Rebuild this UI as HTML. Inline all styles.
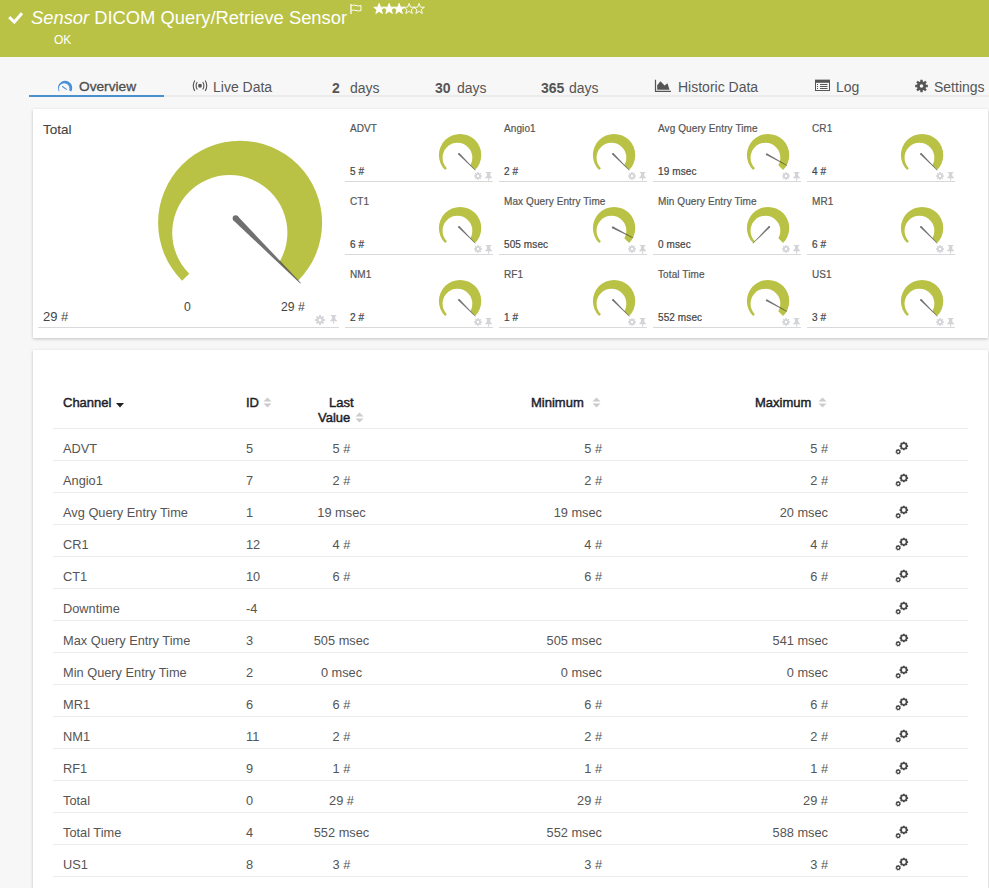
<!DOCTYPE html><html><head><meta charset="utf-8"><title>DICOM Query/Retrieve Sensor</title><style>
*{box-sizing:border-box}
html,body{margin:0;padding:0}
body{width:989px;height:888px;overflow:hidden;background:#f7f7f7;font-family:"Liberation Sans",sans-serif;position:relative;color:#555}
.a{position:absolute;white-space:nowrap}
.hdr{position:absolute;left:0;top:0;width:989px;height:57px;background:#b9c244}
.ttl{left:31px;top:7px;font-size:18.35px;line-height:22px;color:#fff}
.ok{left:54px;top:33px;font-size:12px;line-height:14px;color:#fff}
.tab{top:80px;font-size:14px;line-height:15px;color:#555}
.tabline{position:absolute;left:29px;top:95px;width:960px;height:2px;background:#ebebeb}
.tabsel{position:absolute;left:29px;top:95px;width:135px;height:2px;background:#4a90cf}
.panel{position:absolute;background:#fff;box-shadow:0 1px 3px rgba(0,0,0,.22)}
.gt{font-size:10px;letter-spacing:0.1px;line-height:12px;color:#555;-webkit-text-stroke:0.2px #555}
.gv{font-size:10px;letter-spacing:0.1px;line-height:12px;color:#444;-webkit-text-stroke:0.2px #444}
.sep{position:absolute;height:1px;background:#d9d9d9}
.th{font-size:13px;line-height:15px;color:#1e1e2a;-webkit-text-stroke:0.45px #1e1e2a}
.td{font-size:12.8px;line-height:15px;color:#555}
.rl{position:absolute;left:53px;width:915px;height:1px;background:#ebebeb}
</style></head><body>
<div class="hdr"></div>
<svg class="a" style="left:8px;top:11px" width="16" height="14" viewBox="0 0 16 14"><path d="M1.2 6.2L6.3 11L14 2.2" fill="none" stroke="#fff" stroke-width="3"/></svg>
<div class="a ttl"><i>Sensor</i> DICOM Query/Retrieve Sensor</div>
<svg class="a" style="left:350px;top:4px" width="12" height="10" viewBox="0 0 12 10"><path d="M1 0V10" stroke="#fff" stroke-width="1.3"/><path d="M1.5 1.5Q3.5 0.5 6 1.5T11 1.5V6.5Q8.5 7.5 6 6.5T1.5 6.5" fill="none" stroke="#fff" stroke-width="1"/></svg>
<svg class="a" style="left:0;top:0" width="989" height="20"><polygon points="379.10,3.40 380.45,7.14 384.43,7.27 381.29,9.71 382.39,13.53 379.10,11.30 375.81,13.53 376.91,9.71 373.77,7.27 377.75,7.14" fill="#fff" stroke="#fff" stroke-width="0.9"/><polygon points="389.10,3.40 390.45,7.14 394.43,7.27 391.29,9.71 392.39,13.53 389.10,11.30 385.81,13.53 386.91,9.71 383.77,7.27 387.75,7.14" fill="#fff" stroke="#fff" stroke-width="0.9"/><polygon points="399.10,3.40 400.45,7.14 404.43,7.27 401.29,9.71 402.39,13.53 399.10,11.30 395.81,13.53 396.91,9.71 393.77,7.27 397.75,7.14" fill="#fff" stroke="#fff" stroke-width="0.9"/><polygon points="409.10,3.40 410.45,7.14 414.43,7.27 411.29,9.71 412.39,13.53 409.10,11.30 405.81,13.53 406.91,9.71 403.77,7.27 407.75,7.14" fill="none" stroke="#fff" stroke-width="0.9"/><polygon points="419.10,3.40 420.45,7.14 424.43,7.27 421.29,9.71 422.39,13.53 419.10,11.30 415.81,13.53 416.91,9.71 413.77,7.27 417.75,7.14" fill="none" stroke="#fff" stroke-width="0.9"/></svg>
<div class="a ok">OK</div>
<div class="tabline"></div><div class="tabsel"></div>
<svg class="a" style="left:58px;top:80px" width="15" height="13" viewBox="0 0 15 13"><path d="M7.10 7.90L0.95 11.45A7.10 7.10 0 1 1 13.25 11.45Z" fill="#4a90d9"/><circle cx="6.20" cy="8.60" r="5.30" fill="#f7f7f7"/><path d="M4.2 6.3L8.7 9.6" stroke="#4a90d9" stroke-width="1.1"/></svg>
<div class="a tab" style="left:79px;top:79px;font-size:13.7px;color:#4d4d4d;-webkit-text-stroke:0.3px #4d4d4d">Overview</div>
<svg class="a" style="left:192px;top:80px" width="16" height="12" viewBox="0 0 16 12"><circle cx="8" cy="5.75" r="1.9" fill="#555"/><path d="M2.8 0.5A10.3 10.3 0 0 0 2.8 11M5.3 2A6.9 6.9 0 0 0 5.3 9.5M13.2 0.5A10.3 10.3 0 0 1 13.2 11M10.7 2A6.9 6.9 0 0 1 10.7 9.5" fill="none" stroke="#555" stroke-width="1.1"/></svg>
<div class="a tab" style="left:213px">Live Data</div>
<div class="a tab" style="left:332px;top:81px"><b>2</b></div><div class="a tab" style="left:350px;top:81px">days</div>
<div class="a tab" style="left:435px;top:81px"><b>30</b></div><div class="a tab" style="left:457px;top:81px">days</div>
<div class="a tab" style="left:541px;top:81px"><b>365</b></div><div class="a tab" style="left:569px;top:81px">days</div>
<svg class="a" style="left:654px;top:79px" width="18" height="14" viewBox="0 0 18 14"><path d="M1.5 0.8V12.4H17" fill="none" stroke="#555" stroke-width="1.2"/><path d="M3.2 10.7V6.3L6.4 2.2L10.6 6.6L13.5 4.2L15.5 10.7Z" fill="#555"/></svg>
<div class="a tab" style="left:678px">Historic Data</div>
<svg class="a" style="left:815px;top:79px" width="16" height="13" viewBox="0 0 16 13"><rect x="0.5" y="1.3" width="14" height="10.2" fill="none" stroke="#555" stroke-width="1"/><rect x="0" y="0.8" width="15" height="3" fill="#555"/><path d="M2 5.5H3M5 5.5H12.5M2 7.5H3M5 7.5H12.5M2 9.5H3M5 9.5H12.5" stroke="#555" stroke-width="1"/></svg>
<div class="a tab" style="left:836px">Log</div>
<svg class="a" style="left:914px;top:79px" width="15" height="14" viewBox="0 0 15 14"><path fill-rule="evenodd" d="M6.27 2.57L6.37 0.70L8.63 0.70L8.73 2.57L9.76 3.00L11.16 1.75L12.75 3.34L11.50 4.74L11.93 5.77L13.80 5.87L13.80 8.13L11.93 8.23L11.50 9.26L12.75 10.66L11.16 12.25L9.76 11.00L8.73 11.43L8.63 13.30L6.37 13.30L6.27 11.43L5.24 11.00L3.84 12.25L2.25 10.66L3.50 9.26L3.07 8.23L1.20 8.13L1.20 5.87L3.07 5.77L3.50 4.74L2.25 3.34L3.84 1.75L5.24 3.00ZM9.30 7.00A1.80 1.80 0 1 0 5.70 7.00A1.80 1.80 0 1 0 9.30 7.00Z" fill="#555"/></svg>
<div class="a tab" style="left:934px">Settings</div>
<div class="panel" style="left:33px;top:109px;width:955px;height:229px"></div>
<div class="a" style="left:43px;top:122px;font-size:13.5px;line-height:15px;color:#444;-webkit-text-stroke:0.1px #444">Total</div>
<div class="a" style="left:43px;top:309px;font-size:13px;line-height:15px;color:#444">29 #</div>
<div class="a" style="left:184px;top:301px;font-size:12.2px;line-height:13px;color:#444">0</div>
<div class="a" style="left:281px;top:301px;font-size:12.2px;line-height:13px;color:#444">29 #</div>
<div class="sep" style="left:38px;top:327px;width:301px"></div>
<svg class="a" style="left:315.0px;top:315.0px" width="10" height="10" viewBox="0 0 10 10"><path fill-rule="evenodd" d="M4.04 1.53L4.12 0.08L5.88 0.08L5.96 1.53L6.77 1.87L7.86 0.90L9.10 2.14L8.13 3.23L8.47 4.04L9.92 4.12L9.92 5.88L8.47 5.96L8.13 6.77L9.10 7.86L7.86 9.10L6.77 8.13L5.96 8.47L5.88 9.92L4.12 9.92L4.04 8.47L3.23 8.13L2.14 9.10L0.90 7.86L1.87 6.77L1.53 5.96L0.08 5.88L0.08 4.12L1.53 4.04L1.87 3.23L0.90 2.14L2.14 0.90L3.23 1.87ZM6.50 5.00A1.50 1.50 0 1 0 3.50 5.00A1.50 1.50 0 1 0 6.50 5.00Z" fill="#d2d4d8"/></svg><svg class="a" style="left:330px;top:315px" width="8" height="10" viewBox="0 0 8 10"><path d="M0.8 0H6.4V1.1H5.3V3.9L7 5.5V6.3H4.1V8.7H3.1V6.3H0.2V5.5L1.9 3.9V1.1H0.8Z" fill="#d2d4d8"/></svg>
<div class="a gt" style="left:350px;top:123px">ADVT</div>
<div class="a gv" style="left:350px;top:166px">5 #</div>
<div class="sep" style="left:345px;top:181px;width:148px"></div>
<svg class="a" style="left:473.0px;top:170.5px" width="10" height="10" viewBox="0 0 10 10"><path fill-rule="evenodd" d="M4.23 2.23L4.30 1.06L5.70 1.06L5.77 2.23L6.42 2.49L7.29 1.72L8.28 2.71L7.51 3.58L7.77 4.23L8.94 4.30L8.94 5.70L7.77 5.77L7.51 6.42L8.28 7.29L7.29 8.28L6.42 7.51L5.77 7.77L5.70 8.94L4.30 8.94L4.23 7.77L3.58 7.51L2.71 8.28L1.72 7.29L2.49 6.42L2.23 5.77L1.06 5.70L1.06 4.30L2.23 4.23L2.49 3.58L1.72 2.71L2.71 1.72L3.58 2.49ZM6.20 5.00A1.20 1.20 0 1 0 3.80 5.00A1.20 1.20 0 1 0 6.20 5.00Z" fill="#d2d4d8"/></svg><svg class="a" style="left:485px;top:172px" width="8" height="10" viewBox="0 0 8 10"><path d="M0.8 0H6.4V1.1H5.3V3.9L7 5.5V6.3H4.1V8.7H3.1V6.3H0.2V5.5L1.9 3.9V1.1H0.8Z" fill="#d2d4d8"/></svg>
<div class="a gt" style="left:504px;top:123px">Angio1</div>
<div class="a gv" style="left:504px;top:166px">2 #</div>
<div class="sep" style="left:499px;top:181px;width:148px"></div>
<svg class="a" style="left:627.0px;top:170.5px" width="10" height="10" viewBox="0 0 10 10"><path fill-rule="evenodd" d="M4.23 2.23L4.30 1.06L5.70 1.06L5.77 2.23L6.42 2.49L7.29 1.72L8.28 2.71L7.51 3.58L7.77 4.23L8.94 4.30L8.94 5.70L7.77 5.77L7.51 6.42L8.28 7.29L7.29 8.28L6.42 7.51L5.77 7.77L5.70 8.94L4.30 8.94L4.23 7.77L3.58 7.51L2.71 8.28L1.72 7.29L2.49 6.42L2.23 5.77L1.06 5.70L1.06 4.30L2.23 4.23L2.49 3.58L1.72 2.71L2.71 1.72L3.58 2.49ZM6.20 5.00A1.20 1.20 0 1 0 3.80 5.00A1.20 1.20 0 1 0 6.20 5.00Z" fill="#d2d4d8"/></svg><svg class="a" style="left:639px;top:172px" width="8" height="10" viewBox="0 0 8 10"><path d="M0.8 0H6.4V1.1H5.3V3.9L7 5.5V6.3H4.1V8.7H3.1V6.3H0.2V5.5L1.9 3.9V1.1H0.8Z" fill="#d2d4d8"/></svg>
<div class="a gt" style="left:658px;top:123px">Avg Query Entry Time</div>
<div class="a gv" style="left:658px;top:166px">19 msec</div>
<div class="sep" style="left:653px;top:181px;width:148px"></div>
<svg class="a" style="left:781.0px;top:170.5px" width="10" height="10" viewBox="0 0 10 10"><path fill-rule="evenodd" d="M4.23 2.23L4.30 1.06L5.70 1.06L5.77 2.23L6.42 2.49L7.29 1.72L8.28 2.71L7.51 3.58L7.77 4.23L8.94 4.30L8.94 5.70L7.77 5.77L7.51 6.42L8.28 7.29L7.29 8.28L6.42 7.51L5.77 7.77L5.70 8.94L4.30 8.94L4.23 7.77L3.58 7.51L2.71 8.28L1.72 7.29L2.49 6.42L2.23 5.77L1.06 5.70L1.06 4.30L2.23 4.23L2.49 3.58L1.72 2.71L2.71 1.72L3.58 2.49ZM6.20 5.00A1.20 1.20 0 1 0 3.80 5.00A1.20 1.20 0 1 0 6.20 5.00Z" fill="#d2d4d8"/></svg><svg class="a" style="left:793px;top:172px" width="8" height="10" viewBox="0 0 8 10"><path d="M0.8 0H6.4V1.1H5.3V3.9L7 5.5V6.3H4.1V8.7H3.1V6.3H0.2V5.5L1.9 3.9V1.1H0.8Z" fill="#d2d4d8"/></svg>
<div class="a gt" style="left:812px;top:123px">CR1</div>
<div class="a gv" style="left:812px;top:166px">4 #</div>
<div class="sep" style="left:807px;top:181px;width:148px"></div>
<svg class="a" style="left:935.0px;top:170.5px" width="10" height="10" viewBox="0 0 10 10"><path fill-rule="evenodd" d="M4.23 2.23L4.30 1.06L5.70 1.06L5.77 2.23L6.42 2.49L7.29 1.72L8.28 2.71L7.51 3.58L7.77 4.23L8.94 4.30L8.94 5.70L7.77 5.77L7.51 6.42L8.28 7.29L7.29 8.28L6.42 7.51L5.77 7.77L5.70 8.94L4.30 8.94L4.23 7.77L3.58 7.51L2.71 8.28L1.72 7.29L2.49 6.42L2.23 5.77L1.06 5.70L1.06 4.30L2.23 4.23L2.49 3.58L1.72 2.71L2.71 1.72L3.58 2.49ZM6.20 5.00A1.20 1.20 0 1 0 3.80 5.00A1.20 1.20 0 1 0 6.20 5.00Z" fill="#d2d4d8"/></svg><svg class="a" style="left:947px;top:172px" width="8" height="10" viewBox="0 0 8 10"><path d="M0.8 0H6.4V1.1H5.3V3.9L7 5.5V6.3H4.1V8.7H3.1V6.3H0.2V5.5L1.9 3.9V1.1H0.8Z" fill="#d2d4d8"/></svg>
<div class="a gt" style="left:350px;top:196px">CT1</div>
<div class="a gv" style="left:350px;top:239px">6 #</div>
<div class="sep" style="left:345px;top:254px;width:148px"></div>
<svg class="a" style="left:473.0px;top:243.5px" width="10" height="10" viewBox="0 0 10 10"><path fill-rule="evenodd" d="M4.23 2.23L4.30 1.06L5.70 1.06L5.77 2.23L6.42 2.49L7.29 1.72L8.28 2.71L7.51 3.58L7.77 4.23L8.94 4.30L8.94 5.70L7.77 5.77L7.51 6.42L8.28 7.29L7.29 8.28L6.42 7.51L5.77 7.77L5.70 8.94L4.30 8.94L4.23 7.77L3.58 7.51L2.71 8.28L1.72 7.29L2.49 6.42L2.23 5.77L1.06 5.70L1.06 4.30L2.23 4.23L2.49 3.58L1.72 2.71L2.71 1.72L3.58 2.49ZM6.20 5.00A1.20 1.20 0 1 0 3.80 5.00A1.20 1.20 0 1 0 6.20 5.00Z" fill="#d2d4d8"/></svg><svg class="a" style="left:485px;top:245px" width="8" height="10" viewBox="0 0 8 10"><path d="M0.8 0H6.4V1.1H5.3V3.9L7 5.5V6.3H4.1V8.7H3.1V6.3H0.2V5.5L1.9 3.9V1.1H0.8Z" fill="#d2d4d8"/></svg>
<div class="a gt" style="left:504px;top:196px">Max Query Entry Time</div>
<div class="a gv" style="left:504px;top:239px">505 msec</div>
<div class="sep" style="left:499px;top:254px;width:148px"></div>
<svg class="a" style="left:627.0px;top:243.5px" width="10" height="10" viewBox="0 0 10 10"><path fill-rule="evenodd" d="M4.23 2.23L4.30 1.06L5.70 1.06L5.77 2.23L6.42 2.49L7.29 1.72L8.28 2.71L7.51 3.58L7.77 4.23L8.94 4.30L8.94 5.70L7.77 5.77L7.51 6.42L8.28 7.29L7.29 8.28L6.42 7.51L5.77 7.77L5.70 8.94L4.30 8.94L4.23 7.77L3.58 7.51L2.71 8.28L1.72 7.29L2.49 6.42L2.23 5.77L1.06 5.70L1.06 4.30L2.23 4.23L2.49 3.58L1.72 2.71L2.71 1.72L3.58 2.49ZM6.20 5.00A1.20 1.20 0 1 0 3.80 5.00A1.20 1.20 0 1 0 6.20 5.00Z" fill="#d2d4d8"/></svg><svg class="a" style="left:639px;top:245px" width="8" height="10" viewBox="0 0 8 10"><path d="M0.8 0H6.4V1.1H5.3V3.9L7 5.5V6.3H4.1V8.7H3.1V6.3H0.2V5.5L1.9 3.9V1.1H0.8Z" fill="#d2d4d8"/></svg>
<div class="a gt" style="left:658px;top:196px">Min Query Entry Time</div>
<div class="a gv" style="left:658px;top:239px">0 msec</div>
<div class="sep" style="left:653px;top:254px;width:148px"></div>
<svg class="a" style="left:781.0px;top:243.5px" width="10" height="10" viewBox="0 0 10 10"><path fill-rule="evenodd" d="M4.23 2.23L4.30 1.06L5.70 1.06L5.77 2.23L6.42 2.49L7.29 1.72L8.28 2.71L7.51 3.58L7.77 4.23L8.94 4.30L8.94 5.70L7.77 5.77L7.51 6.42L8.28 7.29L7.29 8.28L6.42 7.51L5.77 7.77L5.70 8.94L4.30 8.94L4.23 7.77L3.58 7.51L2.71 8.28L1.72 7.29L2.49 6.42L2.23 5.77L1.06 5.70L1.06 4.30L2.23 4.23L2.49 3.58L1.72 2.71L2.71 1.72L3.58 2.49ZM6.20 5.00A1.20 1.20 0 1 0 3.80 5.00A1.20 1.20 0 1 0 6.20 5.00Z" fill="#d2d4d8"/></svg><svg class="a" style="left:793px;top:245px" width="8" height="10" viewBox="0 0 8 10"><path d="M0.8 0H6.4V1.1H5.3V3.9L7 5.5V6.3H4.1V8.7H3.1V6.3H0.2V5.5L1.9 3.9V1.1H0.8Z" fill="#d2d4d8"/></svg>
<div class="a gt" style="left:812px;top:196px">MR1</div>
<div class="a gv" style="left:812px;top:239px">6 #</div>
<div class="sep" style="left:807px;top:254px;width:148px"></div>
<svg class="a" style="left:935.0px;top:243.5px" width="10" height="10" viewBox="0 0 10 10"><path fill-rule="evenodd" d="M4.23 2.23L4.30 1.06L5.70 1.06L5.77 2.23L6.42 2.49L7.29 1.72L8.28 2.71L7.51 3.58L7.77 4.23L8.94 4.30L8.94 5.70L7.77 5.77L7.51 6.42L8.28 7.29L7.29 8.28L6.42 7.51L5.77 7.77L5.70 8.94L4.30 8.94L4.23 7.77L3.58 7.51L2.71 8.28L1.72 7.29L2.49 6.42L2.23 5.77L1.06 5.70L1.06 4.30L2.23 4.23L2.49 3.58L1.72 2.71L2.71 1.72L3.58 2.49ZM6.20 5.00A1.20 1.20 0 1 0 3.80 5.00A1.20 1.20 0 1 0 6.20 5.00Z" fill="#d2d4d8"/></svg><svg class="a" style="left:947px;top:245px" width="8" height="10" viewBox="0 0 8 10"><path d="M0.8 0H6.4V1.1H5.3V3.9L7 5.5V6.3H4.1V8.7H3.1V6.3H0.2V5.5L1.9 3.9V1.1H0.8Z" fill="#d2d4d8"/></svg>
<div class="a gt" style="left:350px;top:269px">NM1</div>
<div class="a gv" style="left:350px;top:312px">2 #</div>
<div class="sep" style="left:345px;top:327px;width:148px"></div>
<svg class="a" style="left:473.0px;top:316.5px" width="10" height="10" viewBox="0 0 10 10"><path fill-rule="evenodd" d="M4.23 2.23L4.30 1.06L5.70 1.06L5.77 2.23L6.42 2.49L7.29 1.72L8.28 2.71L7.51 3.58L7.77 4.23L8.94 4.30L8.94 5.70L7.77 5.77L7.51 6.42L8.28 7.29L7.29 8.28L6.42 7.51L5.77 7.77L5.70 8.94L4.30 8.94L4.23 7.77L3.58 7.51L2.71 8.28L1.72 7.29L2.49 6.42L2.23 5.77L1.06 5.70L1.06 4.30L2.23 4.23L2.49 3.58L1.72 2.71L2.71 1.72L3.58 2.49ZM6.20 5.00A1.20 1.20 0 1 0 3.80 5.00A1.20 1.20 0 1 0 6.20 5.00Z" fill="#d2d4d8"/></svg><svg class="a" style="left:485px;top:318px" width="8" height="10" viewBox="0 0 8 10"><path d="M0.8 0H6.4V1.1H5.3V3.9L7 5.5V6.3H4.1V8.7H3.1V6.3H0.2V5.5L1.9 3.9V1.1H0.8Z" fill="#d2d4d8"/></svg>
<div class="a gt" style="left:504px;top:269px">RF1</div>
<div class="a gv" style="left:504px;top:312px">1 #</div>
<div class="sep" style="left:499px;top:327px;width:148px"></div>
<svg class="a" style="left:627.0px;top:316.5px" width="10" height="10" viewBox="0 0 10 10"><path fill-rule="evenodd" d="M4.23 2.23L4.30 1.06L5.70 1.06L5.77 2.23L6.42 2.49L7.29 1.72L8.28 2.71L7.51 3.58L7.77 4.23L8.94 4.30L8.94 5.70L7.77 5.77L7.51 6.42L8.28 7.29L7.29 8.28L6.42 7.51L5.77 7.77L5.70 8.94L4.30 8.94L4.23 7.77L3.58 7.51L2.71 8.28L1.72 7.29L2.49 6.42L2.23 5.77L1.06 5.70L1.06 4.30L2.23 4.23L2.49 3.58L1.72 2.71L2.71 1.72L3.58 2.49ZM6.20 5.00A1.20 1.20 0 1 0 3.80 5.00A1.20 1.20 0 1 0 6.20 5.00Z" fill="#d2d4d8"/></svg><svg class="a" style="left:639px;top:318px" width="8" height="10" viewBox="0 0 8 10"><path d="M0.8 0H6.4V1.1H5.3V3.9L7 5.5V6.3H4.1V8.7H3.1V6.3H0.2V5.5L1.9 3.9V1.1H0.8Z" fill="#d2d4d8"/></svg>
<div class="a gt" style="left:658px;top:269px">Total Time</div>
<div class="a gv" style="left:658px;top:312px">552 msec</div>
<div class="sep" style="left:653px;top:327px;width:148px"></div>
<svg class="a" style="left:781.0px;top:316.5px" width="10" height="10" viewBox="0 0 10 10"><path fill-rule="evenodd" d="M4.23 2.23L4.30 1.06L5.70 1.06L5.77 2.23L6.42 2.49L7.29 1.72L8.28 2.71L7.51 3.58L7.77 4.23L8.94 4.30L8.94 5.70L7.77 5.77L7.51 6.42L8.28 7.29L7.29 8.28L6.42 7.51L5.77 7.77L5.70 8.94L4.30 8.94L4.23 7.77L3.58 7.51L2.71 8.28L1.72 7.29L2.49 6.42L2.23 5.77L1.06 5.70L1.06 4.30L2.23 4.23L2.49 3.58L1.72 2.71L2.71 1.72L3.58 2.49ZM6.20 5.00A1.20 1.20 0 1 0 3.80 5.00A1.20 1.20 0 1 0 6.20 5.00Z" fill="#d2d4d8"/></svg><svg class="a" style="left:793px;top:318px" width="8" height="10" viewBox="0 0 8 10"><path d="M0.8 0H6.4V1.1H5.3V3.9L7 5.5V6.3H4.1V8.7H3.1V6.3H0.2V5.5L1.9 3.9V1.1H0.8Z" fill="#d2d4d8"/></svg>
<div class="a gt" style="left:812px;top:269px">US1</div>
<div class="a gv" style="left:812px;top:312px">3 #</div>
<div class="sep" style="left:807px;top:327px;width:148px"></div>
<svg class="a" style="left:935.0px;top:316.5px" width="10" height="10" viewBox="0 0 10 10"><path fill-rule="evenodd" d="M4.23 2.23L4.30 1.06L5.70 1.06L5.77 2.23L6.42 2.49L7.29 1.72L8.28 2.71L7.51 3.58L7.77 4.23L8.94 4.30L8.94 5.70L7.77 5.77L7.51 6.42L8.28 7.29L7.29 8.28L6.42 7.51L5.77 7.77L5.70 8.94L4.30 8.94L4.23 7.77L3.58 7.51L2.71 8.28L1.72 7.29L2.49 6.42L2.23 5.77L1.06 5.70L1.06 4.30L2.23 4.23L2.49 3.58L1.72 2.71L2.71 1.72L3.58 2.49ZM6.20 5.00A1.20 1.20 0 1 0 3.80 5.00A1.20 1.20 0 1 0 6.20 5.00Z" fill="#d2d4d8"/></svg><svg class="a" style="left:947px;top:318px" width="8" height="10" viewBox="0 0 8 10"><path d="M0.8 0H6.4V1.1H5.3V3.9L7 5.5V6.3H4.1V8.7H3.1V6.3H0.2V5.5L1.9 3.9V1.1H0.8Z" fill="#d2d4d8"/></svg>
<svg class="a" style="left:0;top:0" width="989" height="340"><path d="M240.10 222.80L182.12 280.78A82.00 82.00 0 1 1 298.08 280.78Z" fill="#b9c244"/><circle cx="229.80" cy="232.70" r="57.60" fill="#fff"/><g opacity="0.72" fill="#3a3a3a"><path d="M233.52 220.47L300.24 283.58L300.88 282.94L237.77 216.22Z"/><circle cx="235.65" cy="218.35" r="3.00"/></g><path d="M460.10 155.10L445.11 170.09A21.20 21.20 0 1 1 475.09 170.09Z" fill="#b9c244"/><circle cx="457.44" cy="157.66" r="14.89" fill="#fff"/><g opacity="0.72" fill="#3a3a3a"><path d="M458.33 154.61L475.16 170.59L475.59 170.16L459.61 153.33Z"/><circle cx="458.97" cy="153.97" r="0.90"/></g><path d="M614.10 155.10L599.11 170.09A21.20 21.20 0 1 1 629.09 170.09Z" fill="#b9c244"/><circle cx="611.44" cy="157.66" r="14.89" fill="#fff"/><g opacity="0.72" fill="#3a3a3a"><path d="M612.33 154.61L629.16 170.59L629.59 170.16L613.61 153.33Z"/><circle cx="612.97" cy="153.97" r="0.90"/></g><path d="M768.10 155.10L753.11 170.09A21.20 21.20 0 1 1 783.09 170.09Z" fill="#b9c244"/><circle cx="765.44" cy="157.66" r="14.89" fill="#fff"/><g opacity="0.72" fill="#3a3a3a"><path d="M766.26 155.12L786.88 165.77L787.17 165.24L767.13 153.54Z"/><circle cx="766.70" cy="154.33" r="0.90"/></g><path d="M922.10 155.10L907.11 170.09A21.20 21.20 0 1 1 937.09 170.09Z" fill="#b9c244"/><circle cx="919.44" cy="157.66" r="14.89" fill="#fff"/><g opacity="0.72" fill="#3a3a3a"><path d="M920.33 154.61L937.16 170.59L937.59 170.16L921.61 153.33Z"/><circle cx="920.97" cy="153.97" r="0.90"/></g><path d="M460.10 228.10L445.11 243.09A21.20 21.20 0 1 1 475.09 243.09Z" fill="#b9c244"/><circle cx="457.44" cy="230.66" r="14.89" fill="#fff"/><g opacity="0.72" fill="#3a3a3a"><path d="M458.33 227.61L475.16 243.59L475.59 243.16L459.61 226.33Z"/><circle cx="458.97" cy="226.97" r="0.90"/></g><path d="M614.10 228.10L599.11 243.09A21.20 21.20 0 1 1 629.09 243.09Z" fill="#b9c244"/><circle cx="611.44" cy="230.66" r="14.89" fill="#fff"/><g opacity="0.72" fill="#3a3a3a"><path d="M612.27 228.16L633.13 238.32L633.41 237.79L613.10 226.56Z"/><circle cx="612.68" cy="227.36" r="0.90"/></g><path d="M768.10 228.10L753.11 243.09A21.20 21.20 0 1 1 783.09 243.09Z" fill="#b9c244"/><circle cx="765.44" cy="230.66" r="14.89" fill="#fff"/><g opacity="0.72" fill="#3a3a3a"><path d="M768.59 226.33L752.61 243.16L753.04 243.59L769.87 227.61Z"/><circle cx="769.23" cy="226.97" r="0.90"/></g><path d="M922.10 228.10L907.11 243.09A21.20 21.20 0 1 1 937.09 243.09Z" fill="#b9c244"/><circle cx="919.44" cy="230.66" r="14.89" fill="#fff"/><g opacity="0.72" fill="#3a3a3a"><path d="M920.33 227.61L937.16 243.59L937.59 243.16L921.61 226.33Z"/><circle cx="920.97" cy="226.97" r="0.90"/></g><path d="M460.10 301.10L445.11 316.09A21.20 21.20 0 1 1 475.09 316.09Z" fill="#b9c244"/><circle cx="457.44" cy="303.66" r="14.89" fill="#fff"/><g opacity="0.72" fill="#3a3a3a"><path d="M458.33 300.61L475.16 316.59L475.59 316.16L459.61 299.33Z"/><circle cx="458.97" cy="299.97" r="0.90"/></g><path d="M614.10 301.10L599.11 316.09A21.20 21.20 0 1 1 629.09 316.09Z" fill="#b9c244"/><circle cx="611.44" cy="303.66" r="14.89" fill="#fff"/><g opacity="0.72" fill="#3a3a3a"><path d="M612.33 300.61L629.16 316.59L629.59 316.16L613.61 299.33Z"/><circle cx="612.97" cy="299.97" r="0.90"/></g><path d="M768.10 301.10L753.11 316.09A21.20 21.20 0 1 1 783.09 316.09Z" fill="#b9c244"/><circle cx="765.44" cy="303.66" r="14.89" fill="#fff"/><g opacity="0.72" fill="#3a3a3a"><path d="M766.26 301.12L786.88 311.77L787.17 311.24L767.13 299.54Z"/><circle cx="766.70" cy="300.33" r="0.90"/></g><path d="M922.10 301.10L907.11 316.09A21.20 21.20 0 1 1 937.09 316.09Z" fill="#b9c244"/><circle cx="919.44" cy="303.66" r="14.89" fill="#fff"/><g opacity="0.72" fill="#3a3a3a"><path d="M920.33 300.61L937.16 316.59L937.59 316.16L921.61 299.33Z"/><circle cx="920.97" cy="299.97" r="0.90"/></g></svg>
<div class="panel" style="left:33px;top:350px;width:955px;height:560px"></div>
<div class="a th" style="left:63px;top:395px">Channel</div>
<svg class="a" style="left:116px;top:403px" width="8" height="5"><path d="M0 0H8L4 4.5Z" fill="#222"/></svg>
<div class="a th" style="left:246px;top:395px">ID</div><svg class="a" style="left:263px;top:397px" width="9" height="11"><path d="M0.5 4.5L4.5 0.5L8.5 4.5Z M0.5 6.5L4.5 10.5L8.5 6.5Z" fill="#ccc"/></svg>
<div class="a th" style="left:329px;top:395px">Last</div>
<div class="a th" style="left:318px;top:410px">Value</div><svg class="a" style="left:355px;top:412px" width="9" height="11"><path d="M0.5 4.5L4.5 0.5L8.5 4.5Z M0.5 6.5L4.5 10.5L8.5 6.5Z" fill="#ccc"/></svg>
<div class="a th" style="left:531px;top:395px">Minimum</div><svg class="a" style="left:592px;top:397px" width="9" height="11"><path d="M0.5 4.5L4.5 0.5L8.5 4.5Z M0.5 6.5L4.5 10.5L8.5 6.5Z" fill="#ccc"/></svg>
<div class="a th" style="left:755px;top:395px">Maximum</div><svg class="a" style="left:818px;top:397px" width="9" height="11"><path d="M0.5 4.5L4.5 0.5L8.5 4.5Z M0.5 6.5L4.5 10.5L8.5 6.5Z" fill="#ccc"/></svg>
<div class="rl" style="top:428px"></div>
<div class="a td" style="left:63px;top:441px">ADVT</div>
<div class="a td" style="left:246px;top:441px">5</div>
<div class="a td" style="left:241.5px;width:200px;text-align:center;top:441px">5 #</div>
<div class="a td" style="left:402px;width:200px;text-align:right;top:441px">5 #</div>
<div class="a td" style="left:628px;width:200px;text-align:right;top:441px">5 #</div>
<svg class="a" style="left:895px;top:441px" width="14" height="14" viewBox="0 0 14 14"><path fill-rule="evenodd" fill="#4a4a4a" d="M7.81 1.43L8.03 0.67L9.57 0.67L9.79 1.43L10.62 1.78L11.32 1.39L12.41 2.48L12.02 3.18L12.37 4.01L13.13 4.23L13.13 5.77L12.37 5.99L12.02 6.82L12.41 7.52L11.32 8.61L10.62 8.22L9.79 8.57L9.57 9.33L8.03 9.33L7.81 8.57L6.98 8.22L6.28 8.61L5.19 7.52L5.58 6.82L5.23 5.99L4.47 5.77L4.47 4.23L5.23 4.01L5.58 3.18L5.19 2.48L6.28 1.39L6.98 1.78ZM10.70 5.00A1.90 1.90 0 1 0 6.90 5.00A1.90 1.90 0 1 0 10.70 5.00Z"/><path fill-rule="evenodd" fill="#4a4a4a" d="M2.53 8.60L2.64 7.96L3.76 7.96L3.87 8.60L4.42 8.87L4.99 8.55L5.69 9.43L5.26 9.92L5.39 10.51L6.00 10.76L5.75 11.86L5.09 11.82L4.71 12.30L4.90 12.93L3.88 13.42L3.51 12.88L2.89 12.88L2.52 13.42L1.50 12.93L1.69 12.30L1.31 11.82L0.65 11.86L0.40 10.76L1.01 10.51L1.14 9.92L0.71 9.43L1.41 8.55L1.98 8.87ZM4.20 10.70A1.00 1.00 0 1 0 2.20 10.70A1.00 1.00 0 1 0 4.20 10.70Z"/></svg>
<div class="rl" style="top:460px"></div>
<div class="a td" style="left:63px;top:473px">Angio1</div>
<div class="a td" style="left:246px;top:473px">7</div>
<div class="a td" style="left:241.5px;width:200px;text-align:center;top:473px">2 #</div>
<div class="a td" style="left:402px;width:200px;text-align:right;top:473px">2 #</div>
<div class="a td" style="left:628px;width:200px;text-align:right;top:473px">2 #</div>
<svg class="a" style="left:895px;top:473px" width="14" height="14" viewBox="0 0 14 14"><path fill-rule="evenodd" fill="#4a4a4a" d="M7.81 1.43L8.03 0.67L9.57 0.67L9.79 1.43L10.62 1.78L11.32 1.39L12.41 2.48L12.02 3.18L12.37 4.01L13.13 4.23L13.13 5.77L12.37 5.99L12.02 6.82L12.41 7.52L11.32 8.61L10.62 8.22L9.79 8.57L9.57 9.33L8.03 9.33L7.81 8.57L6.98 8.22L6.28 8.61L5.19 7.52L5.58 6.82L5.23 5.99L4.47 5.77L4.47 4.23L5.23 4.01L5.58 3.18L5.19 2.48L6.28 1.39L6.98 1.78ZM10.70 5.00A1.90 1.90 0 1 0 6.90 5.00A1.90 1.90 0 1 0 10.70 5.00Z"/><path fill-rule="evenodd" fill="#4a4a4a" d="M2.53 8.60L2.64 7.96L3.76 7.96L3.87 8.60L4.42 8.87L4.99 8.55L5.69 9.43L5.26 9.92L5.39 10.51L6.00 10.76L5.75 11.86L5.09 11.82L4.71 12.30L4.90 12.93L3.88 13.42L3.51 12.88L2.89 12.88L2.52 13.42L1.50 12.93L1.69 12.30L1.31 11.82L0.65 11.86L0.40 10.76L1.01 10.51L1.14 9.92L0.71 9.43L1.41 8.55L1.98 8.87ZM4.20 10.70A1.00 1.00 0 1 0 2.20 10.70A1.00 1.00 0 1 0 4.20 10.70Z"/></svg>
<div class="rl" style="top:492px"></div>
<div class="a td" style="left:63px;top:505px">Avg Query Entry Time</div>
<div class="a td" style="left:246px;top:505px">1</div>
<div class="a td" style="left:241.5px;width:200px;text-align:center;top:505px">19 msec</div>
<div class="a td" style="left:402px;width:200px;text-align:right;top:505px">19 msec</div>
<div class="a td" style="left:628px;width:200px;text-align:right;top:505px">20 msec</div>
<svg class="a" style="left:895px;top:505px" width="14" height="14" viewBox="0 0 14 14"><path fill-rule="evenodd" fill="#4a4a4a" d="M7.81 1.43L8.03 0.67L9.57 0.67L9.79 1.43L10.62 1.78L11.32 1.39L12.41 2.48L12.02 3.18L12.37 4.01L13.13 4.23L13.13 5.77L12.37 5.99L12.02 6.82L12.41 7.52L11.32 8.61L10.62 8.22L9.79 8.57L9.57 9.33L8.03 9.33L7.81 8.57L6.98 8.22L6.28 8.61L5.19 7.52L5.58 6.82L5.23 5.99L4.47 5.77L4.47 4.23L5.23 4.01L5.58 3.18L5.19 2.48L6.28 1.39L6.98 1.78ZM10.70 5.00A1.90 1.90 0 1 0 6.90 5.00A1.90 1.90 0 1 0 10.70 5.00Z"/><path fill-rule="evenodd" fill="#4a4a4a" d="M2.53 8.60L2.64 7.96L3.76 7.96L3.87 8.60L4.42 8.87L4.99 8.55L5.69 9.43L5.26 9.92L5.39 10.51L6.00 10.76L5.75 11.86L5.09 11.82L4.71 12.30L4.90 12.93L3.88 13.42L3.51 12.88L2.89 12.88L2.52 13.42L1.50 12.93L1.69 12.30L1.31 11.82L0.65 11.86L0.40 10.76L1.01 10.51L1.14 9.92L0.71 9.43L1.41 8.55L1.98 8.87ZM4.20 10.70A1.00 1.00 0 1 0 2.20 10.70A1.00 1.00 0 1 0 4.20 10.70Z"/></svg>
<div class="rl" style="top:524px"></div>
<div class="a td" style="left:63px;top:537px">CR1</div>
<div class="a td" style="left:246px;top:537px">12</div>
<div class="a td" style="left:241.5px;width:200px;text-align:center;top:537px">4 #</div>
<div class="a td" style="left:402px;width:200px;text-align:right;top:537px">4 #</div>
<div class="a td" style="left:628px;width:200px;text-align:right;top:537px">4 #</div>
<svg class="a" style="left:895px;top:537px" width="14" height="14" viewBox="0 0 14 14"><path fill-rule="evenodd" fill="#4a4a4a" d="M7.81 1.43L8.03 0.67L9.57 0.67L9.79 1.43L10.62 1.78L11.32 1.39L12.41 2.48L12.02 3.18L12.37 4.01L13.13 4.23L13.13 5.77L12.37 5.99L12.02 6.82L12.41 7.52L11.32 8.61L10.62 8.22L9.79 8.57L9.57 9.33L8.03 9.33L7.81 8.57L6.98 8.22L6.28 8.61L5.19 7.52L5.58 6.82L5.23 5.99L4.47 5.77L4.47 4.23L5.23 4.01L5.58 3.18L5.19 2.48L6.28 1.39L6.98 1.78ZM10.70 5.00A1.90 1.90 0 1 0 6.90 5.00A1.90 1.90 0 1 0 10.70 5.00Z"/><path fill-rule="evenodd" fill="#4a4a4a" d="M2.53 8.60L2.64 7.96L3.76 7.96L3.87 8.60L4.42 8.87L4.99 8.55L5.69 9.43L5.26 9.92L5.39 10.51L6.00 10.76L5.75 11.86L5.09 11.82L4.71 12.30L4.90 12.93L3.88 13.42L3.51 12.88L2.89 12.88L2.52 13.42L1.50 12.93L1.69 12.30L1.31 11.82L0.65 11.86L0.40 10.76L1.01 10.51L1.14 9.92L0.71 9.43L1.41 8.55L1.98 8.87ZM4.20 10.70A1.00 1.00 0 1 0 2.20 10.70A1.00 1.00 0 1 0 4.20 10.70Z"/></svg>
<div class="rl" style="top:556px"></div>
<div class="a td" style="left:63px;top:569px">CT1</div>
<div class="a td" style="left:246px;top:569px">10</div>
<div class="a td" style="left:241.5px;width:200px;text-align:center;top:569px">6 #</div>
<div class="a td" style="left:402px;width:200px;text-align:right;top:569px">6 #</div>
<div class="a td" style="left:628px;width:200px;text-align:right;top:569px">6 #</div>
<svg class="a" style="left:895px;top:569px" width="14" height="14" viewBox="0 0 14 14"><path fill-rule="evenodd" fill="#4a4a4a" d="M7.81 1.43L8.03 0.67L9.57 0.67L9.79 1.43L10.62 1.78L11.32 1.39L12.41 2.48L12.02 3.18L12.37 4.01L13.13 4.23L13.13 5.77L12.37 5.99L12.02 6.82L12.41 7.52L11.32 8.61L10.62 8.22L9.79 8.57L9.57 9.33L8.03 9.33L7.81 8.57L6.98 8.22L6.28 8.61L5.19 7.52L5.58 6.82L5.23 5.99L4.47 5.77L4.47 4.23L5.23 4.01L5.58 3.18L5.19 2.48L6.28 1.39L6.98 1.78ZM10.70 5.00A1.90 1.90 0 1 0 6.90 5.00A1.90 1.90 0 1 0 10.70 5.00Z"/><path fill-rule="evenodd" fill="#4a4a4a" d="M2.53 8.60L2.64 7.96L3.76 7.96L3.87 8.60L4.42 8.87L4.99 8.55L5.69 9.43L5.26 9.92L5.39 10.51L6.00 10.76L5.75 11.86L5.09 11.82L4.71 12.30L4.90 12.93L3.88 13.42L3.51 12.88L2.89 12.88L2.52 13.42L1.50 12.93L1.69 12.30L1.31 11.82L0.65 11.86L0.40 10.76L1.01 10.51L1.14 9.92L0.71 9.43L1.41 8.55L1.98 8.87ZM4.20 10.70A1.00 1.00 0 1 0 2.20 10.70A1.00 1.00 0 1 0 4.20 10.70Z"/></svg>
<div class="rl" style="top:588px"></div>
<div class="a td" style="left:63px;top:601px">Downtime</div>
<div class="a td" style="left:246px;top:601px">-4</div>
<svg class="a" style="left:895px;top:601px" width="14" height="14" viewBox="0 0 14 14"><path fill-rule="evenodd" fill="#4a4a4a" d="M7.81 1.43L8.03 0.67L9.57 0.67L9.79 1.43L10.62 1.78L11.32 1.39L12.41 2.48L12.02 3.18L12.37 4.01L13.13 4.23L13.13 5.77L12.37 5.99L12.02 6.82L12.41 7.52L11.32 8.61L10.62 8.22L9.79 8.57L9.57 9.33L8.03 9.33L7.81 8.57L6.98 8.22L6.28 8.61L5.19 7.52L5.58 6.82L5.23 5.99L4.47 5.77L4.47 4.23L5.23 4.01L5.58 3.18L5.19 2.48L6.28 1.39L6.98 1.78ZM10.70 5.00A1.90 1.90 0 1 0 6.90 5.00A1.90 1.90 0 1 0 10.70 5.00Z"/><path fill-rule="evenodd" fill="#4a4a4a" d="M2.53 8.60L2.64 7.96L3.76 7.96L3.87 8.60L4.42 8.87L4.99 8.55L5.69 9.43L5.26 9.92L5.39 10.51L6.00 10.76L5.75 11.86L5.09 11.82L4.71 12.30L4.90 12.93L3.88 13.42L3.51 12.88L2.89 12.88L2.52 13.42L1.50 12.93L1.69 12.30L1.31 11.82L0.65 11.86L0.40 10.76L1.01 10.51L1.14 9.92L0.71 9.43L1.41 8.55L1.98 8.87ZM4.20 10.70A1.00 1.00 0 1 0 2.20 10.70A1.00 1.00 0 1 0 4.20 10.70Z"/></svg>
<div class="rl" style="top:620px"></div>
<div class="a td" style="left:63px;top:633px">Max Query Entry Time</div>
<div class="a td" style="left:246px;top:633px">3</div>
<div class="a td" style="left:241.5px;width:200px;text-align:center;top:633px">505 msec</div>
<div class="a td" style="left:402px;width:200px;text-align:right;top:633px">505 msec</div>
<div class="a td" style="left:628px;width:200px;text-align:right;top:633px">541 msec</div>
<svg class="a" style="left:895px;top:633px" width="14" height="14" viewBox="0 0 14 14"><path fill-rule="evenodd" fill="#4a4a4a" d="M7.81 1.43L8.03 0.67L9.57 0.67L9.79 1.43L10.62 1.78L11.32 1.39L12.41 2.48L12.02 3.18L12.37 4.01L13.13 4.23L13.13 5.77L12.37 5.99L12.02 6.82L12.41 7.52L11.32 8.61L10.62 8.22L9.79 8.57L9.57 9.33L8.03 9.33L7.81 8.57L6.98 8.22L6.28 8.61L5.19 7.52L5.58 6.82L5.23 5.99L4.47 5.77L4.47 4.23L5.23 4.01L5.58 3.18L5.19 2.48L6.28 1.39L6.98 1.78ZM10.70 5.00A1.90 1.90 0 1 0 6.90 5.00A1.90 1.90 0 1 0 10.70 5.00Z"/><path fill-rule="evenodd" fill="#4a4a4a" d="M2.53 8.60L2.64 7.96L3.76 7.96L3.87 8.60L4.42 8.87L4.99 8.55L5.69 9.43L5.26 9.92L5.39 10.51L6.00 10.76L5.75 11.86L5.09 11.82L4.71 12.30L4.90 12.93L3.88 13.42L3.51 12.88L2.89 12.88L2.52 13.42L1.50 12.93L1.69 12.30L1.31 11.82L0.65 11.86L0.40 10.76L1.01 10.51L1.14 9.92L0.71 9.43L1.41 8.55L1.98 8.87ZM4.20 10.70A1.00 1.00 0 1 0 2.20 10.70A1.00 1.00 0 1 0 4.20 10.70Z"/></svg>
<div class="rl" style="top:652px"></div>
<div class="a td" style="left:63px;top:665px">Min Query Entry Time</div>
<div class="a td" style="left:246px;top:665px">2</div>
<div class="a td" style="left:241.5px;width:200px;text-align:center;top:665px">0 msec</div>
<div class="a td" style="left:402px;width:200px;text-align:right;top:665px">0 msec</div>
<div class="a td" style="left:628px;width:200px;text-align:right;top:665px">0 msec</div>
<svg class="a" style="left:895px;top:665px" width="14" height="14" viewBox="0 0 14 14"><path fill-rule="evenodd" fill="#4a4a4a" d="M7.81 1.43L8.03 0.67L9.57 0.67L9.79 1.43L10.62 1.78L11.32 1.39L12.41 2.48L12.02 3.18L12.37 4.01L13.13 4.23L13.13 5.77L12.37 5.99L12.02 6.82L12.41 7.52L11.32 8.61L10.62 8.22L9.79 8.57L9.57 9.33L8.03 9.33L7.81 8.57L6.98 8.22L6.28 8.61L5.19 7.52L5.58 6.82L5.23 5.99L4.47 5.77L4.47 4.23L5.23 4.01L5.58 3.18L5.19 2.48L6.28 1.39L6.98 1.78ZM10.70 5.00A1.90 1.90 0 1 0 6.90 5.00A1.90 1.90 0 1 0 10.70 5.00Z"/><path fill-rule="evenodd" fill="#4a4a4a" d="M2.53 8.60L2.64 7.96L3.76 7.96L3.87 8.60L4.42 8.87L4.99 8.55L5.69 9.43L5.26 9.92L5.39 10.51L6.00 10.76L5.75 11.86L5.09 11.82L4.71 12.30L4.90 12.93L3.88 13.42L3.51 12.88L2.89 12.88L2.52 13.42L1.50 12.93L1.69 12.30L1.31 11.82L0.65 11.86L0.40 10.76L1.01 10.51L1.14 9.92L0.71 9.43L1.41 8.55L1.98 8.87ZM4.20 10.70A1.00 1.00 0 1 0 2.20 10.70A1.00 1.00 0 1 0 4.20 10.70Z"/></svg>
<div class="rl" style="top:684px"></div>
<div class="a td" style="left:63px;top:697px">MR1</div>
<div class="a td" style="left:246px;top:697px">6</div>
<div class="a td" style="left:241.5px;width:200px;text-align:center;top:697px">6 #</div>
<div class="a td" style="left:402px;width:200px;text-align:right;top:697px">6 #</div>
<div class="a td" style="left:628px;width:200px;text-align:right;top:697px">6 #</div>
<svg class="a" style="left:895px;top:697px" width="14" height="14" viewBox="0 0 14 14"><path fill-rule="evenodd" fill="#4a4a4a" d="M7.81 1.43L8.03 0.67L9.57 0.67L9.79 1.43L10.62 1.78L11.32 1.39L12.41 2.48L12.02 3.18L12.37 4.01L13.13 4.23L13.13 5.77L12.37 5.99L12.02 6.82L12.41 7.52L11.32 8.61L10.62 8.22L9.79 8.57L9.57 9.33L8.03 9.33L7.81 8.57L6.98 8.22L6.28 8.61L5.19 7.52L5.58 6.82L5.23 5.99L4.47 5.77L4.47 4.23L5.23 4.01L5.58 3.18L5.19 2.48L6.28 1.39L6.98 1.78ZM10.70 5.00A1.90 1.90 0 1 0 6.90 5.00A1.90 1.90 0 1 0 10.70 5.00Z"/><path fill-rule="evenodd" fill="#4a4a4a" d="M2.53 8.60L2.64 7.96L3.76 7.96L3.87 8.60L4.42 8.87L4.99 8.55L5.69 9.43L5.26 9.92L5.39 10.51L6.00 10.76L5.75 11.86L5.09 11.82L4.71 12.30L4.90 12.93L3.88 13.42L3.51 12.88L2.89 12.88L2.52 13.42L1.50 12.93L1.69 12.30L1.31 11.82L0.65 11.86L0.40 10.76L1.01 10.51L1.14 9.92L0.71 9.43L1.41 8.55L1.98 8.87ZM4.20 10.70A1.00 1.00 0 1 0 2.20 10.70A1.00 1.00 0 1 0 4.20 10.70Z"/></svg>
<div class="rl" style="top:716px"></div>
<div class="a td" style="left:63px;top:729px">NM1</div>
<div class="a td" style="left:246px;top:729px">11</div>
<div class="a td" style="left:241.5px;width:200px;text-align:center;top:729px">2 #</div>
<div class="a td" style="left:402px;width:200px;text-align:right;top:729px">2 #</div>
<div class="a td" style="left:628px;width:200px;text-align:right;top:729px">2 #</div>
<svg class="a" style="left:895px;top:729px" width="14" height="14" viewBox="0 0 14 14"><path fill-rule="evenodd" fill="#4a4a4a" d="M7.81 1.43L8.03 0.67L9.57 0.67L9.79 1.43L10.62 1.78L11.32 1.39L12.41 2.48L12.02 3.18L12.37 4.01L13.13 4.23L13.13 5.77L12.37 5.99L12.02 6.82L12.41 7.52L11.32 8.61L10.62 8.22L9.79 8.57L9.57 9.33L8.03 9.33L7.81 8.57L6.98 8.22L6.28 8.61L5.19 7.52L5.58 6.82L5.23 5.99L4.47 5.77L4.47 4.23L5.23 4.01L5.58 3.18L5.19 2.48L6.28 1.39L6.98 1.78ZM10.70 5.00A1.90 1.90 0 1 0 6.90 5.00A1.90 1.90 0 1 0 10.70 5.00Z"/><path fill-rule="evenodd" fill="#4a4a4a" d="M2.53 8.60L2.64 7.96L3.76 7.96L3.87 8.60L4.42 8.87L4.99 8.55L5.69 9.43L5.26 9.92L5.39 10.51L6.00 10.76L5.75 11.86L5.09 11.82L4.71 12.30L4.90 12.93L3.88 13.42L3.51 12.88L2.89 12.88L2.52 13.42L1.50 12.93L1.69 12.30L1.31 11.82L0.65 11.86L0.40 10.76L1.01 10.51L1.14 9.92L0.71 9.43L1.41 8.55L1.98 8.87ZM4.20 10.70A1.00 1.00 0 1 0 2.20 10.70A1.00 1.00 0 1 0 4.20 10.70Z"/></svg>
<div class="rl" style="top:748px"></div>
<div class="a td" style="left:63px;top:761px">RF1</div>
<div class="a td" style="left:246px;top:761px">9</div>
<div class="a td" style="left:241.5px;width:200px;text-align:center;top:761px">1 #</div>
<div class="a td" style="left:402px;width:200px;text-align:right;top:761px">1 #</div>
<div class="a td" style="left:628px;width:200px;text-align:right;top:761px">1 #</div>
<svg class="a" style="left:895px;top:761px" width="14" height="14" viewBox="0 0 14 14"><path fill-rule="evenodd" fill="#4a4a4a" d="M7.81 1.43L8.03 0.67L9.57 0.67L9.79 1.43L10.62 1.78L11.32 1.39L12.41 2.48L12.02 3.18L12.37 4.01L13.13 4.23L13.13 5.77L12.37 5.99L12.02 6.82L12.41 7.52L11.32 8.61L10.62 8.22L9.79 8.57L9.57 9.33L8.03 9.33L7.81 8.57L6.98 8.22L6.28 8.61L5.19 7.52L5.58 6.82L5.23 5.99L4.47 5.77L4.47 4.23L5.23 4.01L5.58 3.18L5.19 2.48L6.28 1.39L6.98 1.78ZM10.70 5.00A1.90 1.90 0 1 0 6.90 5.00A1.90 1.90 0 1 0 10.70 5.00Z"/><path fill-rule="evenodd" fill="#4a4a4a" d="M2.53 8.60L2.64 7.96L3.76 7.96L3.87 8.60L4.42 8.87L4.99 8.55L5.69 9.43L5.26 9.92L5.39 10.51L6.00 10.76L5.75 11.86L5.09 11.82L4.71 12.30L4.90 12.93L3.88 13.42L3.51 12.88L2.89 12.88L2.52 13.42L1.50 12.93L1.69 12.30L1.31 11.82L0.65 11.86L0.40 10.76L1.01 10.51L1.14 9.92L0.71 9.43L1.41 8.55L1.98 8.87ZM4.20 10.70A1.00 1.00 0 1 0 2.20 10.70A1.00 1.00 0 1 0 4.20 10.70Z"/></svg>
<div class="rl" style="top:780px"></div>
<div class="a td" style="left:63px;top:793px">Total</div>
<div class="a td" style="left:246px;top:793px">0</div>
<div class="a td" style="left:241.5px;width:200px;text-align:center;top:793px">29 #</div>
<div class="a td" style="left:402px;width:200px;text-align:right;top:793px">29 #</div>
<div class="a td" style="left:628px;width:200px;text-align:right;top:793px">29 #</div>
<svg class="a" style="left:895px;top:793px" width="14" height="14" viewBox="0 0 14 14"><path fill-rule="evenodd" fill="#4a4a4a" d="M7.81 1.43L8.03 0.67L9.57 0.67L9.79 1.43L10.62 1.78L11.32 1.39L12.41 2.48L12.02 3.18L12.37 4.01L13.13 4.23L13.13 5.77L12.37 5.99L12.02 6.82L12.41 7.52L11.32 8.61L10.62 8.22L9.79 8.57L9.57 9.33L8.03 9.33L7.81 8.57L6.98 8.22L6.28 8.61L5.19 7.52L5.58 6.82L5.23 5.99L4.47 5.77L4.47 4.23L5.23 4.01L5.58 3.18L5.19 2.48L6.28 1.39L6.98 1.78ZM10.70 5.00A1.90 1.90 0 1 0 6.90 5.00A1.90 1.90 0 1 0 10.70 5.00Z"/><path fill-rule="evenodd" fill="#4a4a4a" d="M2.53 8.60L2.64 7.96L3.76 7.96L3.87 8.60L4.42 8.87L4.99 8.55L5.69 9.43L5.26 9.92L5.39 10.51L6.00 10.76L5.75 11.86L5.09 11.82L4.71 12.30L4.90 12.93L3.88 13.42L3.51 12.88L2.89 12.88L2.52 13.42L1.50 12.93L1.69 12.30L1.31 11.82L0.65 11.86L0.40 10.76L1.01 10.51L1.14 9.92L0.71 9.43L1.41 8.55L1.98 8.87ZM4.20 10.70A1.00 1.00 0 1 0 2.20 10.70A1.00 1.00 0 1 0 4.20 10.70Z"/></svg>
<div class="rl" style="top:812px"></div>
<div class="a td" style="left:63px;top:825px">Total Time</div>
<div class="a td" style="left:246px;top:825px">4</div>
<div class="a td" style="left:241.5px;width:200px;text-align:center;top:825px">552 msec</div>
<div class="a td" style="left:402px;width:200px;text-align:right;top:825px">552 msec</div>
<div class="a td" style="left:628px;width:200px;text-align:right;top:825px">588 msec</div>
<svg class="a" style="left:895px;top:825px" width="14" height="14" viewBox="0 0 14 14"><path fill-rule="evenodd" fill="#4a4a4a" d="M7.81 1.43L8.03 0.67L9.57 0.67L9.79 1.43L10.62 1.78L11.32 1.39L12.41 2.48L12.02 3.18L12.37 4.01L13.13 4.23L13.13 5.77L12.37 5.99L12.02 6.82L12.41 7.52L11.32 8.61L10.62 8.22L9.79 8.57L9.57 9.33L8.03 9.33L7.81 8.57L6.98 8.22L6.28 8.61L5.19 7.52L5.58 6.82L5.23 5.99L4.47 5.77L4.47 4.23L5.23 4.01L5.58 3.18L5.19 2.48L6.28 1.39L6.98 1.78ZM10.70 5.00A1.90 1.90 0 1 0 6.90 5.00A1.90 1.90 0 1 0 10.70 5.00Z"/><path fill-rule="evenodd" fill="#4a4a4a" d="M2.53 8.60L2.64 7.96L3.76 7.96L3.87 8.60L4.42 8.87L4.99 8.55L5.69 9.43L5.26 9.92L5.39 10.51L6.00 10.76L5.75 11.86L5.09 11.82L4.71 12.30L4.90 12.93L3.88 13.42L3.51 12.88L2.89 12.88L2.52 13.42L1.50 12.93L1.69 12.30L1.31 11.82L0.65 11.86L0.40 10.76L1.01 10.51L1.14 9.92L0.71 9.43L1.41 8.55L1.98 8.87ZM4.20 10.70A1.00 1.00 0 1 0 2.20 10.70A1.00 1.00 0 1 0 4.20 10.70Z"/></svg>
<div class="rl" style="top:844px"></div>
<div class="a td" style="left:63px;top:857px">US1</div>
<div class="a td" style="left:246px;top:857px">8</div>
<div class="a td" style="left:241.5px;width:200px;text-align:center;top:857px">3 #</div>
<div class="a td" style="left:402px;width:200px;text-align:right;top:857px">3 #</div>
<div class="a td" style="left:628px;width:200px;text-align:right;top:857px">3 #</div>
<svg class="a" style="left:895px;top:857px" width="14" height="14" viewBox="0 0 14 14"><path fill-rule="evenodd" fill="#4a4a4a" d="M7.81 1.43L8.03 0.67L9.57 0.67L9.79 1.43L10.62 1.78L11.32 1.39L12.41 2.48L12.02 3.18L12.37 4.01L13.13 4.23L13.13 5.77L12.37 5.99L12.02 6.82L12.41 7.52L11.32 8.61L10.62 8.22L9.79 8.57L9.57 9.33L8.03 9.33L7.81 8.57L6.98 8.22L6.28 8.61L5.19 7.52L5.58 6.82L5.23 5.99L4.47 5.77L4.47 4.23L5.23 4.01L5.58 3.18L5.19 2.48L6.28 1.39L6.98 1.78ZM10.70 5.00A1.90 1.90 0 1 0 6.90 5.00A1.90 1.90 0 1 0 10.70 5.00Z"/><path fill-rule="evenodd" fill="#4a4a4a" d="M2.53 8.60L2.64 7.96L3.76 7.96L3.87 8.60L4.42 8.87L4.99 8.55L5.69 9.43L5.26 9.92L5.39 10.51L6.00 10.76L5.75 11.86L5.09 11.82L4.71 12.30L4.90 12.93L3.88 13.42L3.51 12.88L2.89 12.88L2.52 13.42L1.50 12.93L1.69 12.30L1.31 11.82L0.65 11.86L0.40 10.76L1.01 10.51L1.14 9.92L0.71 9.43L1.41 8.55L1.98 8.87ZM4.20 10.70A1.00 1.00 0 1 0 2.20 10.70A1.00 1.00 0 1 0 4.20 10.70Z"/></svg>
<div class="rl" style="top:876px"></div>
</body></html>
